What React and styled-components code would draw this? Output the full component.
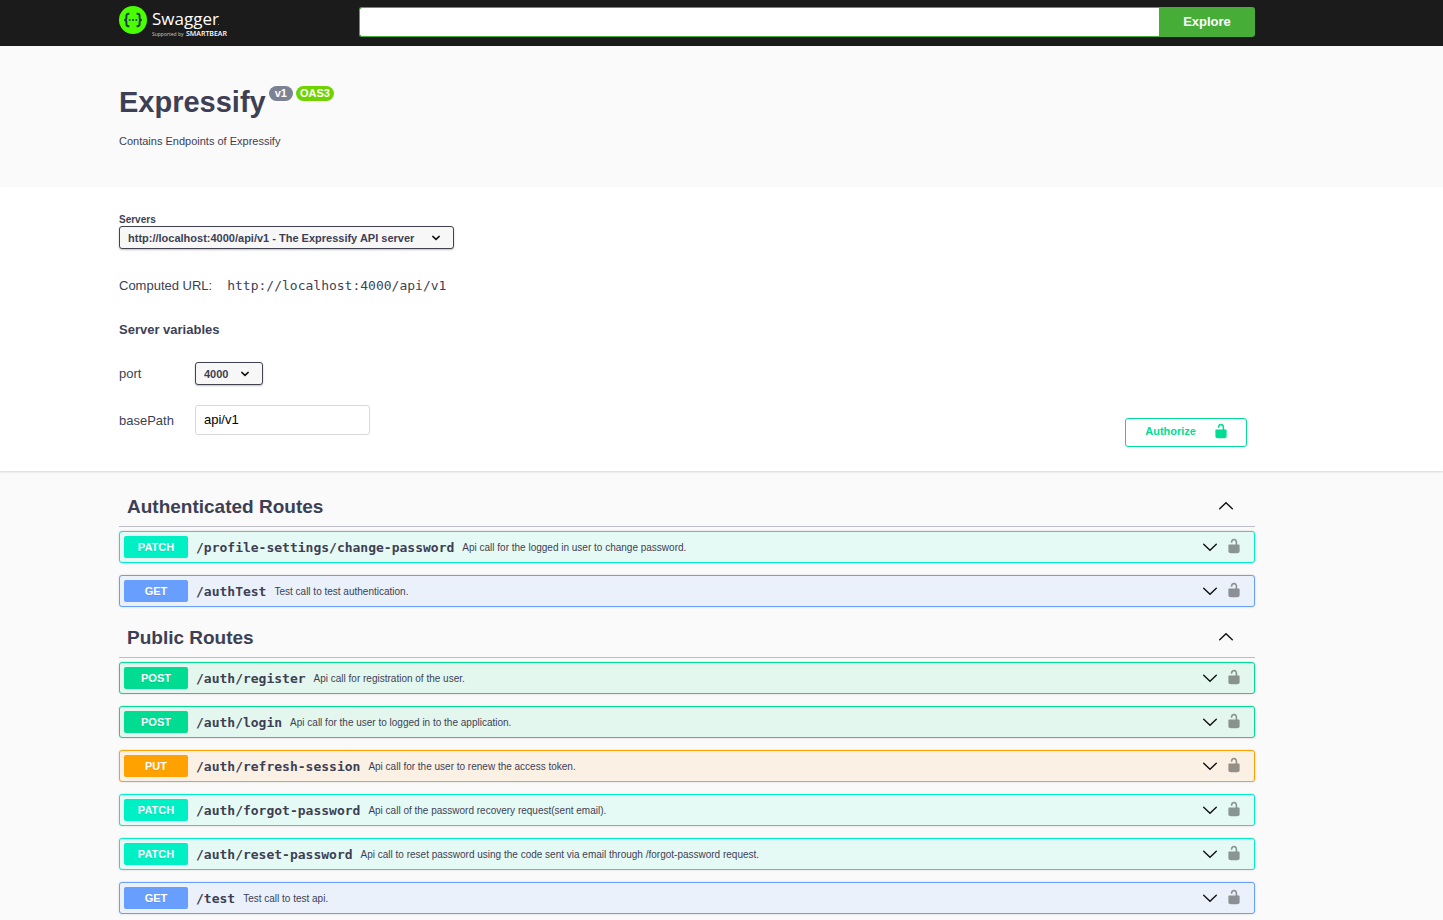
import React, { useState } from 'react'
import styled, { createGlobalStyle } from 'styled-components'

const GlobalStyle = createGlobalStyle`
  * {
    box-sizing: border-box;
  }
  body {
    margin: 0;
    background: #fafafa;
    color: #3d3f54;
    font-family: 'Liberation Sans', Arial, sans-serif;
    font-size: 13px;
  }
  button,
  input,
  select {
    font-family: inherit;
    margin: 0;
  }
`

const colors = {
  GET: { main: '#689fff', soft: '#eaf1fb' },
  POST: { main: '#00dc91', soft: '#e4f7ee' },
  PUT: { main: '#ffa200', soft: '#fbf0e4' },
  PATCH: { main: '#00f0c6', soft: '#e6faf5' },
}

const groups = [
  {
    name: 'Authenticated Routes',
    routes: [
      {
        method: 'PATCH',
        path: '/profile-settings/change-password',
        summary: 'Api call for the logged in user to change password.',
      },
      { method: 'GET', path: '/authTest', summary: 'Test call to test authentication.' },
    ],
  },
  {
    name: 'Public Routes',
    routes: [
      {
        method: 'POST',
        path: '/auth/register',
        summary: 'Api call for registration of the user.',
      },
      {
        method: 'POST',
        path: '/auth/login',
        summary: 'Api call for the user to logged in to the application.',
      },
      {
        method: 'PUT',
        path: '/auth/refresh-session',
        summary: 'Api call for the user to renew the access token.',
      },
      {
        method: 'PATCH',
        path: '/auth/forgot-password',
        summary: 'Api call of the password recovery request(sent email).',
      },
      {
        method: 'PATCH',
        path: '/auth/reset-password',
        summary:
          'Api call to reset password using the code sent via email through /forgot-password request.',
      },
      { method: 'GET', path: '/test', summary: 'Test call to test api.' },
    ],
  },
]

const Band = styled.div`
  padding-right: 69px;
`

const TopBar = styled(Band)`
  background: #1b1b1b;
`

const ServerBand = styled(Band)`
  background: #fff;
  box-shadow: 0 1px 2px rgba(0, 0, 0, 0.15);
`

const Wrapper = styled.div`
  max-width: 1168px;
  margin: 0 auto;
  padding: 0 16px;
`

const TopBarInner = styled(Wrapper)`
  display: flex;
  align-items: center;
  height: 46px;
  padding-bottom: 2px;
`

const LogoLink = styled.a`
  width: 240px;
  height: 34px;
  flex: none;
`

const UrlForm = styled.form`
  display: flex;
  flex: 1;
`

const UrlInput = styled.input`
  flex: 1;
  min-width: 0;
  height: 30px;
  padding: 0 8px;
  border: 1px solid #46ae37;
  border-right: 0;
  border-radius: 3px 0 0 3px;
  background: #fff;
  outline: none;
`

const ExploreButton = styled.button`
  width: 96px;
  height: 30px;
  padding: 0 6px 2px;
  border: 0;
  border-radius: 0 3px 3px 0;
  background: #46ae37;
  color: #fff;
  font-size: 13px;
  font-weight: bold;
  cursor: pointer;
`

const Info = styled(Wrapper)`
  padding-top: 39px;
  padding-bottom: 38px;
`

const TitleRow = styled.div`
  display: flex;
  align-items: flex-start;
  gap: 3px;
`

const Title = styled.h1`
  margin: 0;
  font-size: 29px;
  line-height: 34px;
`

const Badge = styled.span`
  margin-top: 1px;
  padding: 0 ${props => (props.$green ? '4px' : '6px')};
  border-radius: 8px;
  background: ${props => (props.$green ? '#6fd300' : '#7d8293')};
  color: #fff;
  font-size: 11px;
  font-weight: bold;
  line-height: 15px;
`

const Description = styled.p`
  margin: 14px 0 0;
  font-size: 11px;
  line-height: 16px;
`

const Schemes = styled(Wrapper)`
  display: flex;
  align-items: flex-end;
  justify-content: space-between;
  padding-top: 27px;
  padding-bottom: 24px;
`

const Servers = styled.div`
  display: flex;
  flex-direction: column;
  align-items: flex-start;
  padding-bottom: 12px;
`

const ServersLabel = styled.label`
  font-size: 10px;
  font-weight: bold;
  line-height: 12px;
`

const SelectBox = styled.div`
  display: grid;
  align-items: center;
  min-width: ${props => (props.$wide ? '335px' : '68px')};
  svg {
    grid-area: 1 / 1;
    justify-self: end;
    margin-right: 13px;
    pointer-events: none;
  }
`

const Select = styled.select`
  grid-area: 1 / 1;
  appearance: none;
  height: 23px;
  padding: 0 32px 0 8px;
  border: 1px solid #41444e;
  border-radius: 3px;
  background: #f7f7f7;
  box-shadow: 0 1px 2px rgba(0, 0, 0, 0.25);
  color: inherit;
  font-size: 11px;
  font-weight: bold;
`

const ComputedUrl = styled.div`
  display: flex;
  gap: 15px;
  margin-top: 29px;
  line-height: 16px;
  code {
    font-family: 'DejaVu Sans Mono', monospace;
    font-size: 13px;
  }
`

const VariablesTitle = styled.h4`
  margin: 28px 0 24px;
  font-size: 13px;
  line-height: 16px;
`

const Variables = styled.div`
  display: grid;
  grid-template-columns: 76px 175px;
  align-items: center;
  justify-items: start;
  row-gap: 20px;
`

const TextInput = styled.input`
  width: 100%;
  height: 30px;
  padding: 0 8px 2px;
  border: 1px solid #d9d9d9;
  border-radius: 3px;
  background: #fff;
  color: #000;
  font-size: 13px;
`

const AuthorizeButton = styled.button`
  display: flex;
  align-items: center;
  gap: 17px;
  height: 29px;
  margin-right: 8px;
  padding: 0 17px 3px 19px;
  border: 1px solid #00dc91;
  border-radius: 3px;
  background: transparent;
  color: #00dc91;
  font-size: 11px;
  font-weight: bold;
  cursor: pointer;
`

const Routes = styled(Wrapper)`
  padding-top: 17px;
`

const GroupHeader = styled.h3`
  display: flex;
  align-items: center;
  justify-content: space-between;
  height: 39px;
  margin: 0 0 4px;
  padding: 0 21px 0 8px;
  border-bottom: 1px solid #bcbdc6;
  font-size: 19px;
`

const IconButton = styled.button`
  display: flex;
  padding: 0 0 2px;
  border: 0;
  background: none;
  color: inherit;
  cursor: pointer;
`

const RouteRow = styled.div`
  display: flex;
  align-items: center;
  height: 32px;
  margin-bottom: 12px;
  padding: 0 12px 0 4px;
  border: 1px solid ${props => colors[props.$method].main};
  border-radius: 3px;
  background: ${props => colors[props.$method].soft};
  box-shadow: 0 0 2px rgba(0, 0, 0, 0.19);
`

const RouteButton = styled.button`
  display: flex;
  flex: 1;
  align-items: center;
  gap: 8px;
  min-width: 0;
  padding: 0;
  border: 0;
  background: none;
  color: inherit;
  font-size: 10px;
  text-align: left;
  cursor: pointer;
  svg {
    margin-left: auto;
  }
`

const Method = styled.span`
  width: 64px;
  border-radius: 2px;
  background: ${props => colors[props.$method].main};
  color: #fff;
  font-size: 11px;
  font-weight: bold;
  line-height: 22px;
  text-align: center;
  text-shadow: 0 1px 0 rgba(0, 0, 0, 0.1);
`

const Path = styled.span`
  font-family: 'DejaVu Sans Mono', monospace;
  font-size: 13px;
  font-weight: bold;
`

const LockButton = styled(IconButton)`
  margin-left: 8px;
  opacity: 0.4;
  color: #000;
`

const SwaggerLogo = () => (
  <svg width="116" height="34" viewBox="0 0 116 34" role="img" aria-label="Swagger">
    <circle cx="14" cy="15" r="14" fill="#49ff00" />
    <g fill="none" stroke="#173647" strokeWidth="1.9">
      <path d="M10.4 8.8H9.4C7.9 8.8 7.4 9.6 7.4 11V12.9C7.4 14.3 6.8 15 5.2 15C6.8 15 7.4 15.7 7.4 17.1V19C7.4 20.4 7.9 21.2 9.4 21.2H10.4" />
      <path d="M17.6 8.8H18.6C20.1 8.8 20.6 9.6 20.6 11V12.9C20.6 14.3 21.2 15 22.8 15C21.2 15 20.6 15.7 20.6 17.1V19C20.6 20.4 20.1 21.2 18.6 21.2H17.6" />
    </g>
    <g fill="#173647">
      <circle cx="10.7" cy="15" r="1" />
      <circle cx="14" cy="15" r="1" />
      <circle cx="17.3" cy="15" r="1" />
    </g>
    <g fill="#fff" fontFamily="'Open Sans', sans-serif">
      <text x="33" y="20" fontSize="17" fontWeight="400">
        Swagger
      </text>
      <rect x="99" y="19" width="1" height="1" fill="#888" />
      <text x="33" y="31" fontSize="5" fill="#ccc">
        Supported by
      </text>
      <text x="67" y="31" fontSize="7" fontWeight="600">
        SMARTBEAR
      </text>
    </g>
  </svg>
)

const Chevron = ({ up }) => (
  <svg width="16" height="16" viewBox="0 0 16 16" fill="none" stroke="#111" strokeWidth="1.4" strokeLinecap="round">
    <path d={up ? 'M1.7 10.8L8 4.8L14.3 10.8' : 'M1.7 5.2L8 11.2L14.3 5.2'} />
  </svg>
)

const SelectArrow = () => (
  <svg width="10" height="8" viewBox="0 0 10 8" fill="none" stroke="#111" strokeWidth="1.5" strokeLinecap="round">
    <path d="M1.8 2.4L5 5.4L8.2 2.4" />
  </svg>
)

const Unlocked = () => (
  <svg width="16" height="16" viewBox="0 0 20 20" fill="currentColor">
    <path d="M15.8 8H14V5.6C14 2.703 12.665 1 10 1 7.334 1 6 2.703 6 5.6V6h2v-.801C8 3.754 8.797 3 10 3c1.203 0 2 .754 2 2.199V8H4c-.553 0-1 .646-1 1.199V17c0 .549.428 1.139.951 1.307l1.197.387C5.672 18.861 6.55 19 7.1 19h5.8c.549 0 1.428-.139 1.951-.307l1.196-.387c.524-.167.953-.757.953-1.306V9.199C17 8.646 16.352 8 15.8 8z" />
  </svg>
)

const Route = ({ route }) => (
  <RouteRow $method={route.method}>
    <RouteButton type="button">
      <Method $method={route.method}>{route.method}</Method>
      <Path>{route.path}</Path>
      <span>{route.summary}</span>
      <Chevron />
    </RouteButton>
    <LockButton type="button" aria-label={`Authorize ${route.path}`}>
      <Unlocked />
    </LockButton>
  </RouteRow>
)

const Group = ({ group }) => {
  const [open, setOpen] = useState(true)
  return (
    <section>
      <GroupHeader>
        {group.name}
        <IconButton type="button" aria-label={`Toggle ${group.name}`} onClick={() => setOpen(!open)}>
          <Chevron up={open} />
        </IconButton>
      </GroupHeader>
      {open && group.routes.map(route => <Route key={route.path} route={route} />)}
    </section>
  )
}

const App = () => {
  const [url, setUrl] = useState('')
  const [basePath, setBasePath] = useState('api/v1')
  return (
    <>
      <GlobalStyle />
      <TopBar as="header">
        <TopBarInner>
          <LogoLink href="#">
            <SwaggerLogo />
          </LogoLink>
          <UrlForm onSubmit={e => e.preventDefault()}>
            <UrlInput aria-label="Definition URL" value={url} onChange={e => setUrl(e.target.value)} />
            <ExploreButton>Explore</ExploreButton>
          </UrlForm>
        </TopBarInner>
      </TopBar>
      <Band>
        <Info>
          <TitleRow>
            <Title>Expressify</Title>
            <Badge>v1</Badge>
            <Badge $green>OAS3</Badge>
          </TitleRow>
          <Description>Contains Endpoints of Expressify</Description>
        </Info>
      </Band>
      <ServerBand>
        <Schemes>
          <Servers>
            <ServersLabel htmlFor="servers">Servers</ServersLabel>
            <SelectBox $wide>
              <Select id="servers">
                <option>http://localhost:4000/api/v1 - The Expressify API server</option>
              </Select>
              <SelectArrow />
            </SelectBox>
            <ComputedUrl>
              <span>Computed URL:</span>
              <code>http://localhost:4000/api/v1</code>
            </ComputedUrl>
            <VariablesTitle>Server variables</VariablesTitle>
            <Variables>
              <label htmlFor="port">port</label>
              <SelectBox>
                <Select id="port">
                  <option>4000</option>
                </Select>
                <SelectArrow />
              </SelectBox>
              <label htmlFor="basePath">basePath</label>
              <TextInput id="basePath" value={basePath} onChange={e => setBasePath(e.target.value)} />
            </Variables>
          </Servers>
          <AuthorizeButton type="button">
            Authorize
            <Unlocked />
          </AuthorizeButton>
        </Schemes>
      </ServerBand>
      <Band as="main">
        <Routes>
          {groups.map(group => (
            <Group key={group.name} group={group} />
          ))}
        </Routes>
      </Band>
    </>
  )
}

export default App
